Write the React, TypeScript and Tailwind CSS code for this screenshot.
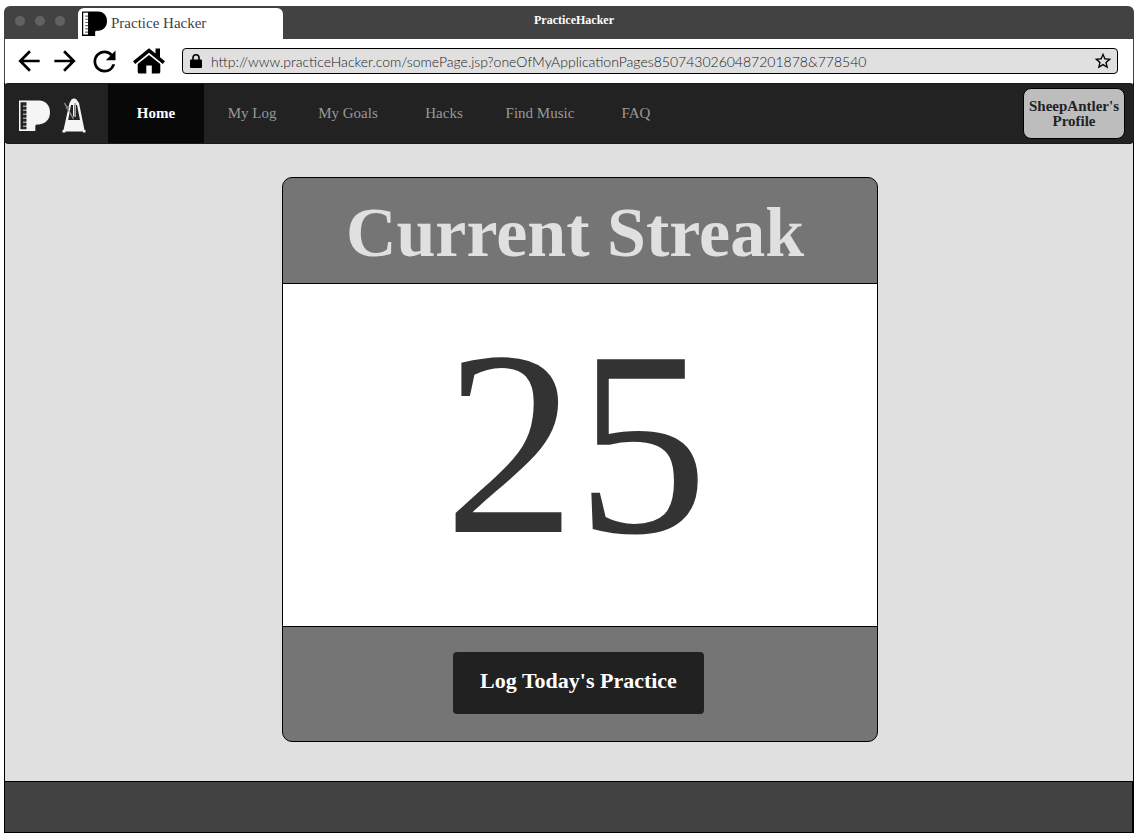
import React from "react";
import { MdArrowBack, MdArrowForward, MdRefresh, MdStarBorder } from "react-icons/md";

function PianoLogo({ className }: { className: string }) {
  return (
    <svg viewBox="0 0 31 31" className={className} fill="currentColor" aria-hidden="true">
      <path
        fillRule="evenodd"
        d="M0 .5H20C27 .7 31 5.500 31 12.300C31 19.500 26.500 24 20 24.500H18C16.500 24.600 16.300 25.500 16.300 27V31H0ZM1.500 2.200V29.200H7.500V2.200Z"
      />
      <path d="M4 5.500H8V7H4ZM4 9.500H8V11H4ZM4 13.500H8V15H4ZM4 17.500H8V19H4ZM4 21.500H8V23H4ZM4 25.500H8V27H4Z" opacity=".6" />
    </svg>
  );
}

function MetronomeLogo() {
  return (
    <svg viewBox="0 0 24 35" className="h-[35px] w-6" aria-hidden="true">
      <path d="M9.500 1.500Q12 -.5 14.500 1.500L17 5L22.500 32H23.500V34.500H21V33.500H3.500V34.500H.5V32H1.500L7.500 5Z" fill="#f5f5f5" />
      <path d="M9 7H11V17.500L12 19.500V7H15L18 22H6.200Z" fill="#222" />
      <path d="M12.300 5H14V19H12.300Z" fill="#aaa" />
      <path d="M2.500 5L11.500 21" stroke="#999" strokeWidth="1.200" />
      <path d="M3.500 9L6.500 7.500L7.500 10L4.500 11.500Z" fill="#777" />
    </svg>
  );
}

function HomeIcon() {
  return (
    <svg viewBox="0 0 32 26" className="h-[26px] w-8" fill="currentColor" aria-hidden="true">
      <path d="M16 .3L22.500 5.600V.5H27V9.300L32 13.300L29.800 15.900L16 4.800L2.200 15.900L0 13.300Z" />
      <path d="M16 7L27.300 16V24Q27.300 25.500 25.500 25.500H18.800V17.500H13.300V25.500H6.500Q4.700 25.500 4.700 24V16Z" />
    </svg>
  );
}

function LockIcon() {
  return (
    <svg viewBox="0 0 12 14" className="h-[14px] w-3" aria-hidden="true">
      <rect y="5.500" width="12" height="8.500" rx="1" fill="currentColor" />
      <path d="M3 6V3.800A3 3 0 0 1 9 3.800V6" fill="none" stroke="currentColor" strokeWidth="1.600" />
    </svg>
  );
}

const links = ["Home", "My Log", "My Goals", "Hacks", "Find Music", "FAQ"];

function TitleBar() {
  return (
    <header className="grid h-[33px] grid-cols-[1fr_auto_1fr] rounded-t-md bg-[#424242]">
      <div className="flex items-end">
        <div className="flex gap-[10px] self-center pb-1 pl-[11px] pr-[13px]">
          <span className="size-[10px] rounded-full bg-[#616161]" />
          <span className="size-[10px] rounded-full bg-[#616161]" />
          <span className="size-[10px] rounded-full bg-[#616161]" />
        </div>
        <div className="flex h-[31px] w-[205px] items-center gap-1 rounded-t-md bg-white px-1 text-[15px] text-[#424242]">
          <PianoLogo className="size-[25px] text-black" />
          Practice Hacker
        </div>
      </div>
      <div className="pl-[10px] pt-[6px] text-[12px] font-bold leading-4 text-white">PracticeHacker</div>
    </header>
  );
}

function Toolbar() {
  return (
    <div className="flex h-11 items-center border-x border-[#424242] bg-white pl-2 pr-[15px] text-black">
      <button aria-label="Back" className="mr-1"><MdArrowBack className="size-8" /></button>
      <button aria-label="Forward" className="mr-[7px]"><MdArrowForward className="size-8" /></button>
      <button aria-label="Reload" className="mr-3"><MdRefresh className="size-[33px]" /></button>
      <button aria-label="Home page" className="mr-[17px]"><HomeIcon /></button>
      <div className="flex h-[26px] flex-1 items-center rounded border border-black bg-[#e0e0e0] pl-[7px] pr-1">
        <LockIcon />
        <input
          aria-label="Address"
          defaultValue="http://www.practiceHacker.com/somePage.jsp?oneOfMyApplicationPages8507430260487201878&778540"
          className="ml-[9px] min-w-0 flex-1 bg-transparent font-[Lato,sans-serif] text-[14px] font-light text-[#222] outline-none"
        />
        <button aria-label="Bookmark"><MdStarBorder className="size-5" /></button>
      </div>
    </div>
  );
}

function NavBar() {
  return (
    <nav className="flex h-[61px] items-center rounded border border-[#1a1a1a] bg-[#222] pr-2">
      <a href="#home" aria-label="PracticeHacker" className="flex w-[103px] items-center gap-3 pl-[14px] pt-1">
        <PianoLogo className="size-[31px] text-[#f5f5f5]" />
        <MetronomeLogo />
      </a>
      <ul className="flex self-stretch text-[15px]">
        {links.map((label, i) => (
          <li key={label} className="flex w-24">
            <a
              href="#nav"
              className={
                i === 0
                  ? "flex flex-1 items-center justify-center bg-[#080808] font-bold text-white"
                  : "flex flex-1 items-center justify-center text-[#999]"
              }
            >
              {label}
            </a>
          </li>
        ))}
      </ul>
      <button className="ml-auto h-[51px] w-[102px] rounded-lg border border-black bg-[#bdbdbd] text-[15px] font-bold leading-[15px] text-[#222]">
        SheepAntler's Profile
      </button>
    </nav>
  );
}

export default function App() {
  return (
    <div className="flex min-h-screen flex-col bg-white px-1 pb-1 pt-[6px] font-['Liberation_Serif',serif]">
      <TitleBar />
      <Toolbar />
      <div className="flex flex-1 flex-col border-x border-black bg-[#e0e0e0]">
        <div className="-mx-px">
          <NavBar />
        </div>
        <main className="flex flex-1 justify-center pb-[39px] pl-[22px] pt-[33px]">
          <section className="flex w-full max-w-[596px] flex-col overflow-hidden rounded-[10px] border border-black bg-[#757575]">
            <h1 className="flex h-[106px] items-center justify-center border-b border-black pr-[10px] pt-1 text-[70px] font-bold text-[#e0e0e0]">
              Current Streak
            </h1>
            <p className="flex flex-1 items-center justify-center bg-white pb-6 pr-2 text-[264px] leading-none text-[#333]">
              25
            </p>
            <div className="flex h-[115px] items-center justify-center border-t border-black pb-[3px] pr-[3px]">
              <button className="h-[62px] w-[251px] rounded bg-[#212121] pb-1 text-[22px] font-bold text-white">
                Log Today's Practice
              </button>
            </div>
          </section>
        </main>
        <footer className="h-[52px] border-y border-r border-black bg-[#424242]" />
      </div>
    </div>
  );
}
